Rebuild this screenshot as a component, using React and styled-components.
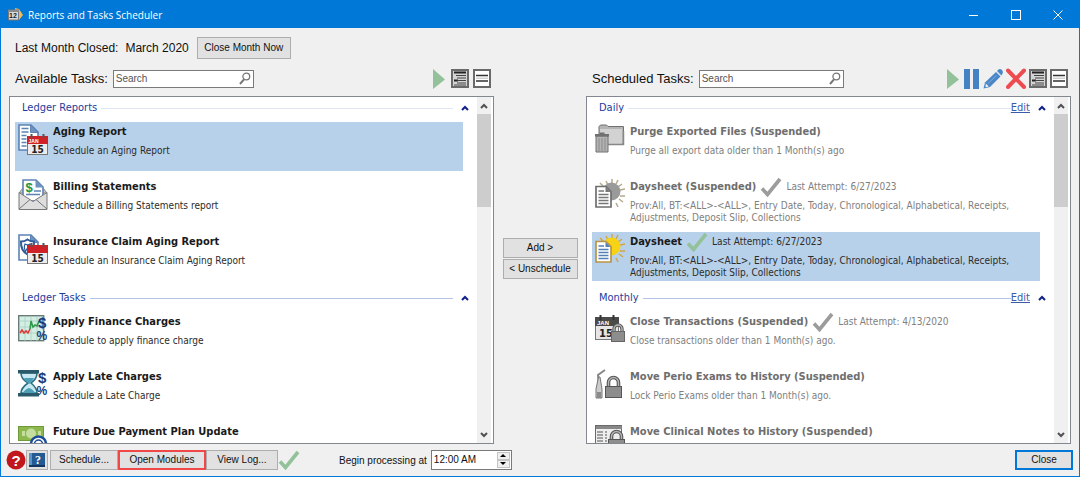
import React from "react";
import styled, { createGlobalStyle } from "styled-components";

const ui = '"Liberation Sans", Arial, sans-serif';
const tahoma = '"DejaVu Sans Condensed", Tahoma, sans-serif';

const GlobalStyle = createGlobalStyle`
  *, *::before, *::after { box-sizing: border-box; }
  body { margin: 0; background: #f0f0f0; font-family: ${ui}; font-size: 12px; color: #111; }
  h1, h2, h3, p, ul { margin: 0; padding: 0; font-weight: normal; }
  ul { list-style: none; }
  svg { display: block; flex: none; }
  button, input { font: inherit; color: inherit; margin: 0; border-radius: 0; }
`;

const Window = styled.main`
  display: flex;
  flex-direction: column;
  height: 100vh;
  border: 1px solid #0078d7;
  background: #f0f0f0;
`;

const TitleBar = styled.header`
  display: flex;
  align-items: center;
  flex: none;
  height: 27px;
  padding-left: 7px;
  background: #0078d7;
  color: #fff;
`;

const WindowTitle = styled.h1`
  flex: 1;
  padding-left: 5px;
  font-family: "Open Sans", "Segoe UI", sans-serif;
  font-size: 10px;
  line-height: 16px;
`;

const CaptionButton = styled.button`
  display: grid;
  place-items: center;
  width: 42px;
  height: 27px;
  padding: 0;
  border: 0;
  background: none;
`;

const MonthRow = styled.section`
  display: flex;
  align-items: center;
  flex: none;
  padding: 9px 8px 0 14px;
  font-size: 12px;
`;

const MonthValue = styled.span`
  margin: 0 8px 0 7px;
`;

const Button = styled.button`
  flex: none;
  width: ${(p) => p.$w}px;
  height: ${(p) => (p.$tall ? 22 : 20)}px;
  padding: 0;
  border: ${(p) => (p.$ring ? `2px solid ${p.$ring}` : "1px solid #adadad")};
  background: #e1e1e1;
  font-size: 10px;
  line-height: 14px;
  white-space: nowrap;
`;

const Columns = styled.div`
  display: grid;
  grid-template-columns: minmax(0, 1fr) 92px minmax(0, 1fr);
  flex: 1;
  min-height: 0;
  padding: 0 8px;
`;

const Panel = styled.section`
  display: flex;
  flex-direction: column;
  min-height: 0;
`;

const PanelHeader = styled.div`
  display: flex;
  align-items: center;
  flex: none;
  height: 37px;
  padding: 2px 3px 0 6px;
`;

const PanelLabel = styled.label`
  margin-right: 5px;
  font-size: 13px;
`;

const SearchBox = styled.div`
  display: flex;
  align-items: center;
  width: ${(p) => p.$w}px;
  height: 18px;
  padding: 0 2px;
  border: 1px solid #7a7a7a;
  background: #fff;
`;

const SearchInput = styled.input`
  flex: 1;
  min-width: 0;
  padding: 0;
  border: 0;
  outline: 0;
  background: none;
  font-size: 10px;
  &::placeholder { color: #555; opacity: 1; }
`;

const Tools = styled.div`
  display: flex;
  align-items: center;
  gap: ${(p) => p.$gap}px;
  margin-left: auto;
`;

const IconButton = styled.button`
  display: grid;
  place-items: center;
  flex: none;
  padding: 0;
  border: 0;
  background: none;
`;

const ListFrame = styled.div`
  display: flex;
  flex: 1;
  min-height: 0;
  border: 1px solid #828790;
  background: #fff;
`;

const ListBody = styled.div`
  flex: 1;
  min-width: 0;
  overflow: hidden;
  padding: 1px 8px 0 5px;
`;

const ScrollTrack = styled.div`
  display: flex;
  flex-direction: column;
  flex: none;
  width: 14px;
  margin-right: 2px;
  background: #f0f0f0;
`;

const ScrollArrow = styled.button`
  display: grid;
  place-items: center;
  flex: none;
  height: 17px;
  padding: 0;
  border: 0;
  background: none;
`;

const ScrollThumb = styled.div`
  height: 27%;
  margin-bottom: auto;
  background: #cdcdcd;
`;

const Group = styled.section`
  padding-bottom: 1px;
`;

const GroupHeader = styled.div`
  display: flex;
  align-items: center;
  height: 24px;
  padding: 0 0 4px 7px;
  font-family: ${tahoma};
  font-size: 11px;
  line-height: 14px;
`;

const GroupTitle = styled.h2`
  font-size: 11px;
  color: #1c3c9c;
`;

const GroupRule = styled.hr`
  flex: 1;
  height: 1px;
  margin: 0 0 0 4px;
  border: 0;
  background: ${(p) => (p.$strong ? "#b4c3e6" : "#dfe5f5")};
`;

const EditLink = styled.a`
  color: #3c5aaa;
  text-decoration: underline;
`;

const Collapse = styled(IconButton)`
  width: 8px;
  height: 12px;
  margin-left: 8px;
`;

const TaskItems = styled.ul`
  && { padding-right: 6px; }
`;

const Task = styled.li`
  display: flex;
  gap: 5px;
  height: 49px;
  margin-bottom: 6px;
  padding: 2px 3px 0;
  font-family: ${tahoma};
  color: ${(p) => (p.$off ? "#808080" : "#2b2b2b")};
  background: ${(p) => (p.$selected ? "#b8d1ea" : "transparent")};
`;

const TaskText = styled.div`
  flex: 1;
  min-width: 0;
`;

const TaskHead = styled.div`
  display: flex;
  align-items: center;
  gap: 4px;
  height: 16px;
`;

const TaskName = styled.h3`
  && { font-weight: bold; }
  font-size: 11px;
  line-height: 16px;
  color: ${(p) => (p.$off ? "#6e6e6e" : "#1a1a1a")};
`;

const Attempt = styled.span`
  font-size: 10px;
  line-height: 12px;
`;

const TaskNote = styled.p`
  && { margin-top: 5px; }
  font-size: 10px;
  line-height: 12px;
`;

const Middle = styled.div`
  display: flex;
  flex-direction: column;
  align-items: center;
  justify-content: center;
  gap: 1px;
  padding-top: 13px;
`;

const Footer = styled.footer`
  display: flex;
  align-items: center;
  flex: none;
  height: 32px;
  padding: 0 6px 1px 5px;
`;

const BookButton = styled(IconButton)`
  width: 22px;
  height: 20px;
  margin-right: 2px;
  border: 1px solid #adadad;
  background: #e1e1e1;
`;

const StartLabel = styled.label`
  margin: 2px 4px 0 39px;
  font-size: 10px;
`;

const TimeField = styled.div`
  display: flex;
  width: 81px;
  height: 20px;
  margin-right: auto;
  padding: 1px;
  border: 1px solid #7a7a7a;
  background: #fff;
`;

const TimeInput = styled.input`
  flex: 1;
  min-width: 0;
  padding: 0 1px;
  border: 0;
  background: none;
  font-size: 10px;
`;

const Steps = styled.div`
  display: flex;
  flex-direction: column;
`;

const Step = styled.button`
  display: grid;
  place-items: center;
  flex: 1;
  width: 13px;
  padding: 0;
  border: 1px solid #c4c4c4;
  background: #f0f0f0;
`;

/* ---------- drawings ---------- */

const Chevron = ({ down, color = "#505050" }) => (
  <svg width="8" height="6" viewBox="0 0 8 6">
    <path d={down ? "M1 1l3 3 3-3" : "M1 5l3-3 3 3"} fill="none" stroke={color} strokeWidth="2" />
  </svg>
);

const Magnifier = () => (
  <svg width="12" height="13" viewBox="0 0 12 13" fill="none" stroke="#777">
    <circle cx="7.3" cy="4.5" r="3.4" strokeWidth="1.3" />
    <path d="M5 7.3L1 12" strokeWidth="2" />
  </svg>
);

const Play = () => (
  <svg width="14" height="22" viewBox="0 0 14 22"><path d="M0 1l12 10.500L0 21z" fill="#93c199" /></svg>
);

const Pause = () => (
  <svg width="16" height="20" viewBox="0 0 16 20"><path d="M0 0h6v20H0zM9 0h6v20H9z" fill="#4482c4" /></svg>
);

const Pencil = () => (
  <svg width="20" height="21" viewBox="0 0 20 21">
    <path d="M0.500 20.500l1.500-6L13 4l4.500 4.500L7 19z" fill="#4a86c8" />
    <path d="M14 3l1.500-1.500q1.800-1 3.400.600t.600 3.400L18.500 7.500z" fill="#4a86c8" />
    <path d="M13.500 3.500l4.500 4.500" stroke="#dbe8f6" strokeWidth="1" />
    <path d="M5 15.500L13.500 7.500" stroke="#80abd9" strokeWidth="1" />
    <path d="M2.800 15.500l3 3-3.300.700z" fill="#e9f1f9" />
  </svg>
);

const Cross = () => (
  <svg width="20" height="21" viewBox="0 0 20 21">
    <path d="M2 2.500l16 16.500M18 2.500L2 19" stroke="#ee4b50" strokeWidth="4" strokeLinecap="round" />
  </svg>
);

const DetailView = () => (
  <svg width="18" height="19" viewBox="0 0 18 19">
    <rect x="1" y="1" width="16" height="17" fill="#d4d4d4" stroke="#6a6a6a" strokeWidth="2" />
    <path d="M3 3.500h12M3 11.500h4" stroke="#222" strokeWidth="2" />
    <path d="M5 6.500h10M6 9h9M6 11.500h9M6 14h9M3 16h12" stroke="#444" strokeWidth="1.200" />
  </svg>
);

const ListView = () => (
  <svg width="18" height="19" viewBox="0 0 18 19">
    <rect x="1" y="1" width="16" height="17" fill="#fff" stroke="#6a6a6a" strokeWidth="2" />
    <path d="M3 6.500h12M3 12h12" stroke="#333" strokeWidth="1.600" />
    <path d="M3 9.200h12" stroke="#bbb" />
  </svg>
);

const Check = ({ color = "#93c199" }) => (
  <svg width="22" height="20" viewBox="0 0 22 20">
    <path d="M2 11.500l5.500 6L20 2" fill="none" stroke={color} strokeWidth="3.600" />
  </svg>
);

const AppIcon = () => (
  <svg width="15" height="15" viewBox="0 0 15 15">
    <path d="M7 1l4 1 4 6-4 5-4-3z" fill="#f0b95a" />
    <rect x="0.500" y="3" width="10" height="10" fill="#d9d9d9" stroke="#777" />
    <path d="M0 3h11v2H0z" fill="#8a8a8a" />
    <text x="1" y="11" fontSize="7" fontWeight="bold" fill="#222" fontFamily="Liberation Sans">12</text>
  </svg>
);

const HelpIcon = () => (
  <svg width="20" height="20" viewBox="0 0 20 20">
    <circle cx="10" cy="10" r="9.500" fill="#c1161c" />
    <text x="10" y="15.500" textAnchor="middle" fontSize="15" fontWeight="bold" fill="#fff" fontFamily="Liberation Sans">?</text>
  </svg>
);

const BookIcon = () => (
  <svg width="16" height="16" viewBox="0 0 16 16">
    <path d="M0 1h16v14H0z" fill="#245a94" />
    <path d="M0 1h3v14H0z" fill="#5b93c4" />
    <path d="M0 14h16" stroke="#12365f" strokeWidth="2" />
    <text x="9" y="12" textAnchor="middle" fontSize="12" fontWeight="bold" fill="#fff" fontFamily="Liberation Serif">?</text>
  </svg>
);

const Glyph = ({ children }) => (
  <svg width="30" height="32" viewBox="0 0 30 32">{children}</svg>
);

const Page = () => (
  <>
    <path d="M1 1h12l7 7v18H1z" fill="#fff" stroke="#5d83b4" strokeWidth="1.600" />
    <path d="M12.500 1l7.500 7.500h-7.500z" fill="#6f93c0" stroke="#5d83b4" />
  </>
);

const Calendar = ({ head = "#cf2127", x = 9, y = 9, label = true }) => (
  <g transform={`translate(${x} ${y})`}>
    <rect x="0.500" y="3.500" width="20" height="18" fill="#ececec" stroke="#777" />
    <path d="M0 3h21v8H0z" fill={head} />
    <path d="M4.500 1v4M16.500 1v4" stroke="#555" strokeWidth="2" />
    {label && <text x="1.500" y="9.500" fontSize="5" fontWeight="bold" fill="#fff" fontFamily="Liberation Sans">JAN</text>}
    <text x="10.500" y="20" textAnchor="middle" fontSize="10" fontWeight="bold" fill="#222" fontFamily="DejaVu Sans Condensed">15</text>
  </g>
);

const Padlock = ({ x, y }) => (
  <g transform={`translate(${x} ${y})`}>
    <path d="M3 9V6a4 4 0 0 1 8 0v3" fill="none" stroke="#5a5a5a" strokeWidth="3.400" />
    <path d="M3 9V6a4 4 0 0 1 8 0v3" fill="none" stroke="#b5b5b5" strokeWidth="1.400" />
    <rect x="0.500" y="8.500" width="13" height="10" fill="#8d8d8d" stroke="#666" />
  </g>
);

const Money = ({ y = 0 }) => (
  <g fill="#1b3a78" fontFamily="Liberation Sans" fontWeight="bold">
    <text x="20" y={13 + y} fontSize="15">$</text>
    <text x="18.500" y={25 + y} fontSize="12">%</text>
  </g>
);

const AgingIcon = () => (
  <Glyph>
    <Page />
    <path d="M3.500 4.500h7M3.500 8h7M3.500 11.500h5M3.500 15h5M3.500 18.500h5M3.500 22h5" stroke="#5d83b4" strokeWidth="1.600" />
    <Calendar />
  </Glyph>
);

const BillingIcon = () => (
  <Glyph>
    <path d="M1 14L5 9h20l4 5z" fill="#c9c9c9" stroke="#888" />
    <path d="M5 1h13l7 7v14H5z" fill="#fff" stroke="#5d83b4" strokeWidth="1.600" />
    <path d="M17.500 1l7.500 7.500h-7.500z" fill="#6f93c0" />
    <text x="7.500" y="13" fontSize="13" fontWeight="bold" fill="#16984a" fontFamily="Liberation Sans">$</text>
    <path d="M16 12h7M8 15.500h14" stroke="#5d83b4" strokeWidth="1.600" />
    <path d="M1 13.500l14 9 14-9v17H1z" fill="#dedede" stroke="#777" />
    <path d="M1 30l11-9.500M29 30l-11-9.500" stroke="#777" fill="none" />
  </Glyph>
);

const InsuranceIcon = () => (
  <Glyph>
    <Page />
    <path d="M9.500 5.500q3 2 6.500 2 .500 9-6.500 13-7-4-6.500-13 3.500 0 6.500-2z" fill="#fff" stroke="#315b99" strokeWidth="2" />
    <path d="M7 10q2.500 1.500 5 0 1.500 3-.500 7.500l-2-3.500-2 3.500q-2-4.500-.500-7.500z" fill="#fff" stroke="#315b99" strokeWidth="1.200" />
    <Calendar x={9} y={8} label={false} />
  </Glyph>
);

const FinanceIcon = () => (
  <Glyph>
    <rect x="0.700" y="1.700" width="25" height="25" fill="#d3efe3" stroke="#6a7c78" strokeWidth="1.400" />
    <path d="M1 7h25M1 13h25M1 19h25M7 2v25M13 2v25M19 2v25" stroke="#a9cfc4" strokeWidth="0.800" />
    <path d="M2 19l2-3 2 3 2-2 2 2 2-4" fill="none" stroke="#e03a3a" strokeWidth="1.600" />
    <path d="M12 15l1-8 2 6 2-2 2 1 2-5" fill="none" stroke="#2f9a4a" strokeWidth="1.600" />
    <Money y={1} />
  </Glyph>
);

const LateIcon = () => (
  <Glyph>
    <path d="M3 4q0 6 7 10-7 5-7 10h16q0-5-6-10 6-4 6-10z" fill="#c9e9f2" stroke="#2d6f83" strokeWidth="1.600" />
    <path d="M6 9h10q-1 3-5 6-4-3-5-6zM4 25q3-5 7-6 4 1 7 6z" fill="#4c9fb5" />
    <path d="M0 1h21v3.500H0zM0 24h21v3.500H0z" fill="#2a5a69" />
    <Money y={1} />
  </Glyph>
);

const PaymentIcon = () => (
  <Glyph>
    <rect x="0.500" y="2.500" width="25" height="14" fill="#8cb84e" stroke="#6f9a38" />
    <circle cx="13" cy="9.500" r="5" fill="#c5dd9d" />
    <path d="M4 7h3v5H4zM20 7h3v5h-3z" fill="#c5dd9d" />
    <circle cx="20.500" cy="20" r="7.500" fill="#fff" stroke="#1e4d98" strokeWidth="2.500" />
    <path d="M16.500 20a4 4 0 0 1 8 0" fill="none" stroke="#1e4d98" strokeWidth="1.500" />
  </Glyph>
);

const PurgeIcon = () => (
  <Glyph>
    <path d="M4 20V2.500L5.500 1h6L13 2.500h15.500V20z" fill="#b5b5b5" stroke="#707070" />
    <path d="M5 5h22v15.500H5z" fill="#d2d2d2" />
    <path d="M4.500 20.500h24V7" fill="none" stroke="#888" strokeWidth="1.500" />
    <path d="M1 12h12v16H1z" fill="#b4b4b4" stroke="#707070" />
    <path d="M4 14v13M7 14v13M10 14v13" stroke="#8a8a8a" />
    <path d="M0 10h14v2.500H0zM4.500 8.500h5v2h-5z" fill="#707070" />
  </Glyph>
);

const DaysheetIcon = ({ sun = "#f8d214", ray = "#d2a645", line = "#5480b8", frame = "#b89449" }) => (
  <Glyph>
    <path d="M17 0v5M23 1l-2 4M27 5l-4 3M30 10l-5 1M30 17h-5M28 23l-4-3M23 28l-2-4M11 2l2 4M5 4l4 4" stroke={ray} strokeWidth="1.500" />
    <circle cx="16.500" cy="12.500" r="9" fill={sun} />
    <path d="M1 7.500h10l5 5V28H1z" fill="#fff" stroke={frame} strokeWidth="1.700" />
    <path d="M10.500 8l5 5h-5z" fill={line} />
    <path d="M3.500 12H9M3.500 15.500h10M3.500 18.500h10M3.500 21.500h10M3.500 24.500h10" stroke={line} strokeWidth="1.600" />
  </Glyph>
);

const DaysheetOffIcon = () => <DaysheetIcon sun="#9a9a9a" ray="#b5a98a" line="#777" frame="#6f6f6f" />;

const CloseIcon = () => (
  <Glyph>
    <rect x="0.500" y="3.500" width="23" height="22" fill="#e6e6e6" stroke="#777" />
    <path d="M0 3h24v9H0z" fill="#4a4a4a" />
    <path d="M5.500 1v5M18.500 1v5" stroke="#333" strokeWidth="2" />
    <text x="2" y="10.500" fontSize="6" fontWeight="bold" fill="#fff" fontFamily="Liberation Sans">JAN</text>
    <text x="4" y="23" fontSize="11" fontWeight="bold" fill="#222" fontFamily="DejaVu Sans Condensed">15</text>
    <Padlock x={16} y={9} />
  </Glyph>
);

const PerioIcon = () => (
  <Glyph>
    <path d="M10 1L3 6l1 12" fill="none" stroke="#888" strokeWidth="2" />
    <path d="M3.500 8h1.500l2 12v9H1v-9z" fill="#ccc" stroke="#777" />
    <path d="M2 23h4v6H2z" fill="#8a8a8a" />
    <path d="M13.500 18v-4.500a5 5 0 0 1 10 0V18" fill="none" stroke="#555" strokeWidth="3.600" />
    <path d="M13.500 18v-4.500a5 5 0 0 1 10 0V18" fill="none" stroke="#b5b5b5" strokeWidth="1.400" />
    <rect x="10.500" y="17.500" width="16" height="11" fill="#8d8d8d" stroke="#555" />
  </Glyph>
);

const NotesIcon = () => (
  <Glyph>
    <rect x="0.500" y="1.500" width="26" height="20" fill="#eee" stroke="#6a6a6a" />
    <path d="M1 2h26v3H1z" fill="#888" />
    <path d="M2 8h6M2 11h6M2 14h6M2 17h6M10 8h2M10 11h2M10 14h2M10 17h2" stroke="#888" strokeWidth="1.400" />
    <path d="M16.500 17v-4.500a5 5 0 0 1 10 0V17" fill="none" stroke="#555" strokeWidth="3.600" />
    <path d="M16.500 17v-4.500a5 5 0 0 1 10 0V17" fill="none" stroke="#b5b5b5" strokeWidth="1.400" />
    <rect x="13.500" y="15.500" width="16" height="11" fill="#8d8d8d" stroke="#555" />
  </Glyph>
);

/* ---------- data ---------- */

const daysheetNote =
  "Prov:All, BT:<ALL>-<ALL>, Entry Date, Today, Chronological, Alphabetical, Receipts, Adjustments, Deposit Slip, Collections";

const available = [
  { name: "Ledger Reports", tasks: [
    { name: "Aging Report", note: "Schedule an Aging Report", Icon: AgingIcon, selected: true },
    { name: "Billing Statements", note: "Schedule a Billing Statements report", Icon: BillingIcon },
    { name: "Insurance Claim Aging Report", note: "Schedule an Insurance Claim Aging Report", Icon: InsuranceIcon },
  ] },
  { name: "Ledger Tasks", tasks: [
    { name: "Apply Finance Charges", note: "Schedule to apply finance charge", Icon: FinanceIcon },
    { name: "Apply Late Charges", note: "Schedule a Late Charge", Icon: LateIcon },
    { name: "Future Due Payment Plan Update", note: "", Icon: PaymentIcon },
  ] },
];

const scheduled = [
  { name: "Daily", tasks: [
    { name: "Purge Exported Files (Suspended)", note: "Purge all export data older than 1 Month(s) ago", Icon: PurgeIcon, off: true },
    { name: "Daysheet (Suspended)", note: daysheetNote, attempt: "6/27/2023", Icon: DaysheetOffIcon, off: true },
    { name: "Daysheet", note: daysheetNote, attempt: "6/27/2023", Icon: DaysheetIcon, selected: true },
  ] },
  { name: "Monthly", tasks: [
    { name: "Close Transactions (Suspended)", note: "Close transactions older than 1 Month(s) ago.", attempt: "4/13/2020", Icon: CloseIcon, off: true },
    { name: "Move Perio Exams to History (Suspended)", note: "Lock Perio Exams older than 1 Month(s) ago.", Icon: PerioIcon, off: true },
    { name: "Move Clinical Notes to History (Suspended)", note: "", Icon: NotesIcon, off: true },
  ] },
];

function TaskList({ groups, editable }) {
  return (
    <ListFrame>
      <ListBody>
        {groups.map((group, i) => (
          <Group key={group.name}>
            <GroupHeader>
              <GroupTitle>{group.name}</GroupTitle>
              <GroupRule $strong={i > 0} />
              {editable && <EditLink href="#edit">Edit</EditLink>}
              <Collapse aria-label={`Collapse ${group.name}`}>
                <Chevron color="#10208c" />
              </Collapse>
            </GroupHeader>
            <TaskItems>
              {group.tasks.map(({ name, note, attempt, Icon, off, selected }) => (
                <Task key={name} $off={off} $selected={selected}>
                  <Icon />
                  <TaskText>
                    <TaskHead>
                      <TaskName $off={off}>{name}</TaskName>
                      {attempt && <Check color={off ? "#9c9c9c" : "#93c199"} />}
                      {attempt && <Attempt>Last Attempt: {attempt}</Attempt>}
                    </TaskHead>
                    <TaskNote>{note}</TaskNote>
                  </TaskText>
                </Task>
              ))}
            </TaskItems>
          </Group>
        ))}
      </ListBody>
      <ScrollTrack>
        <ScrollArrow aria-label="Scroll up"><Chevron /></ScrollArrow>
        <ScrollThumb />
        <ScrollArrow aria-label="Scroll down"><Chevron down /></ScrollArrow>
      </ScrollTrack>
    </ListFrame>
  );
}

function TaskPanel({ id, label, searchWidth, groups, editable }) {
  return (
    <Panel>
      <PanelHeader>
        <PanelLabel htmlFor={id}>{label}</PanelLabel>
        <SearchBox $w={searchWidth}>
          <SearchInput id={id} type="text" placeholder="Search" />
          <Magnifier />
        </SearchBox>
        <Tools $gap={editable ? 3 : 4}>
          <IconButton aria-label="Run"><Play /></IconButton>
          {editable && (
            <>
              <IconButton aria-label="Pause"><Pause /></IconButton>
              <IconButton aria-label="Edit"><Pencil /></IconButton>
              <IconButton aria-label="Delete"><Cross /></IconButton>
            </>
          )}
          <IconButton aria-label="Detail view"><DetailView /></IconButton>
          <IconButton aria-label="List view"><ListView /></IconButton>
        </Tools>
      </PanelHeader>
      <TaskList groups={groups} editable={editable} />
    </Panel>
  );
}

export default function App() {
  return (
    <>
      <GlobalStyle />
      <Window>
        <TitleBar>
          <AppIcon />
          <WindowTitle>Reports and Tasks Scheduler</WindowTitle>
          <CaptionButton aria-label="Minimize">
            <svg width="10" height="10" viewBox="0 0 10 10"><path d="M0 5.500h9" stroke="#fff" /></svg>
          </CaptionButton>
          <CaptionButton aria-label="Maximize">
            <svg width="10" height="10" viewBox="0 0 10 10"><rect x="0.500" y="0.500" width="9" height="9" fill="none" stroke="#fff" /></svg>
          </CaptionButton>
          <CaptionButton aria-label="Close window">
            <svg width="10" height="10" viewBox="0 0 10 10"><path d="M0.500 0.500l9 9M9.500 0.500l-9 9" stroke="#fff" /></svg>
          </CaptionButton>
        </TitleBar>
        <MonthRow>
          <span>Last Month Closed:</span>
          <MonthValue>March 2020</MonthValue>
          <Button $w={94} $tall>Close Month Now</Button>
        </MonthRow>
        <Columns>
          <TaskPanel id="available" label="Available Tasks:" searchWidth={141} groups={available} />
          <Middle>
            <Button $w={75}>Add &gt;</Button>
            <Button $w={75}>&lt; Unschedule</Button>
          </Middle>
          <TaskPanel id="scheduled" label="Scheduled Tasks:" searchWidth={145} groups={scheduled} editable />
        </Columns>
        <Footer>
          <IconButton aria-label="Help"><HelpIcon /></IconButton>
          <BookButton aria-label="Manual"><BookIcon /></BookButton>
          <Button $w={68}>Schedule...</Button>
          <Button $w={88} $ring="#f04848">Open Modules</Button>
          <Button $w={72}>View Log...</Button>
          <Check />
          <StartLabel htmlFor="start">Begin processing at</StartLabel>
          <TimeField>
            <TimeInput id="start" type="text" defaultValue="12:00 AM" />
            <Steps>
              <Step aria-label="Later"><svg width="6" height="3" viewBox="0 0 6 3"><path d="M0 3l3-3 3 3z" /></svg></Step>
              <Step aria-label="Earlier"><svg width="6" height="3" viewBox="0 0 6 3"><path d="M0 0l3 3 3-3z" /></svg></Step>
            </Steps>
          </TimeField>
          <Button $w={58} $ring="#0078d7">Close</Button>
        </Footer>
      </Window>
    </>
  );
}
